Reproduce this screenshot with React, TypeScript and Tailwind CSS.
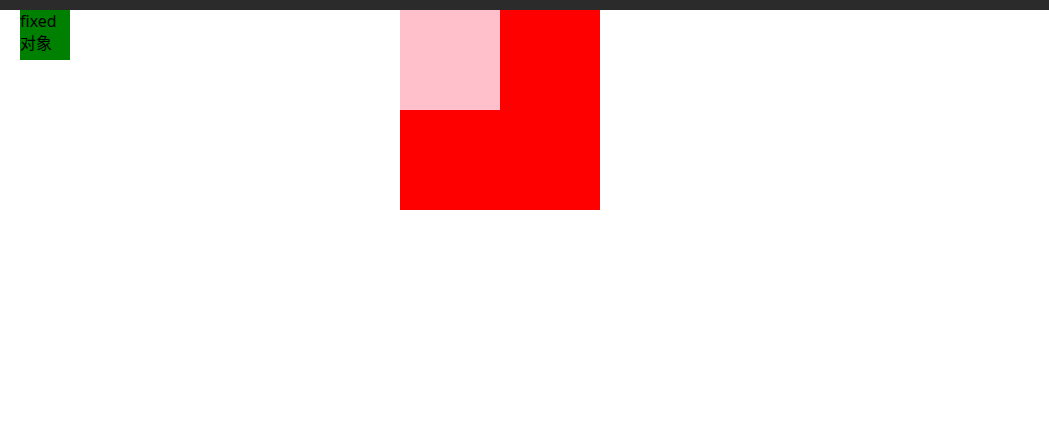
export default function App() {
  return (
    <div className="w-[1049px] h-[439px] bg-white" style={{ fontFamily: '"Noto Sans", "Noto Sans CJK SC", sans-serif' }}>
      <div className="h-[10px] bg-[#2b2b2b]" />
      <div className="flex items-start">
        <div className="ml-[20px] w-[50px] h-[50px] bg-[#008000] text-black text-[16px] leading-[22px]">fixed 对象</div>
        <div className="ml-[330px] w-[200px] h-[200px] bg-[#ff0000]">
          <div className="w-[100px] h-[100px] bg-[#ffc0cb]" />
        </div>
      </div>
    </div>
  );
}
